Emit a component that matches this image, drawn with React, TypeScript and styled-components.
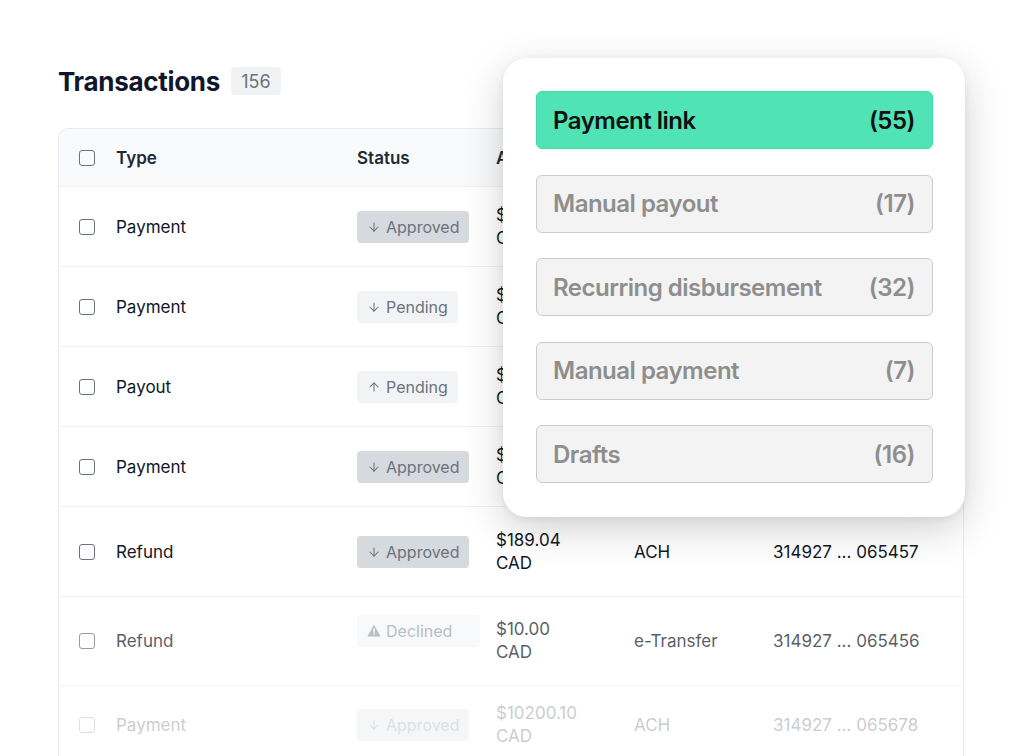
import React from "react";
import styled, { createGlobalStyle } from "styled-components";
import { ArrowDown, ArrowUp } from "lucide-react";

const GlobalStyle = createGlobalStyle`
  html, body {
    margin: 0;
    padding: 0;
    background: #ffffff;
  }
  body {
    font-family: Inter, "Noto Sans", "Liberation Sans", sans-serif;
    color: #111827;
    -webkit-font-smoothing: antialiased;
  }
`;

const Page = styled.div`
  position: relative;
  width: 1024px;
  height: 756px;
  overflow: hidden;
  padding: 66px 0 0 58px;
  box-sizing: border-box;
`;

const TitleRow = styled.div`
  display: flex;
  align-items: center;
  gap: 11px;
  height: 30px;
`;

const Title = styled.h1`
  margin: 0;
  font-size: 26px;
  font-weight: 700;
  letter-spacing: -0.3px;
  color: #0f172a;
`;

const CountBadge = styled.span`
  display: inline-flex;
  align-items: center;
  justify-content: center;
  width: 50px;
  height: 28px;
  border-radius: 4px;
  background: #f1f2f4;
  color: #6b7280;
  font-size: 18px;
`;

const Card = styled.div`
  margin-top: 32px;
  width: 904px;
  border: 1px solid #e8eaed;
  border-bottom: none;
  border-radius: 10px 10px 0 0;
  overflow: hidden;
`;

const Row = styled.div<{ $height: number; $fade?: number; $head?: boolean }>`
  display: grid;
  grid-template-columns: 37px 241px 139px 138px 139px 1fr;
  align-items: center;
  height: ${(p) => p.$height}px;
  padding-left: 20px;
  background: ${(p) => (p.$head ? "#f9fafb" : "#ffffff")};
  border-bottom: 1px solid #f1f2f4;
  opacity: ${(p) => p.$fade ?? 1};
  font-size: 17px;
  font-weight: ${(p) => (p.$head ? 600 : 400)};
  color: ${(p) => (p.$head ? "#1f2937" : "#111827")};
`;

const Check = styled.span`
  width: 14px;
  height: 14px;
  border: 1.5px solid #6b7280;
  border-radius: 3px;
`;

const Cell = styled.span`
  white-space: nowrap;
`;

const Amount = styled.span`
  line-height: 23px;
  color: #111827;
`;

const Status = styled.span<{ $tone: "dark" | "light" | "faint" }>`
  justify-self: start;
  display: inline-flex;
  align-items: center;
  gap: 5px;
  height: 32px;
  padding: 0 ${(p) => (p.$tone === "faint" ? "28px" : "10px")} 0 10px;
  margin-bottom: ${(p) => (p.$tone === "faint" ? "21px" : "0")};
  border-radius: 4px;
  font-size: 16px;
  color: ${(p) => (p.$tone === "faint" ? "#9ca3af" : "#6b7280")};
  background: ${(p) =>
    p.$tone === "dark" ? "#d6d9de" : p.$tone === "light" ? "#f2f3f5" : "#f6f7f8"};
`;

const Popup = styled.div`
  position: absolute;
  top: 58px;
  left: 503px;
  width: 462px;
  box-sizing: border-box;
  padding: 33px 32px 34px 33px;
  background: #ffffff;
  border-radius: 24px;
  box-shadow: 0 12px 40px rgba(0, 0, 0, 0.18), 0 2px 8px rgba(0, 0, 0, 0.06);
  display: flex;
  flex-direction: column;
  gap: 25.5px;
`;

const Option = styled.div<{ $active?: boolean }>`
  display: flex;
  align-items: center;
  justify-content: space-between;
  height: 58px;
  box-sizing: border-box;
  padding: 0 17px 0 16px;
  border-radius: 6px;
  border: 1px solid ${(p) => (p.$active ? "#45d6a8" : "#cbcbcb")};
  background: ${(p) => (p.$active ? "#50e3b5" : "#f3f3f3")};
  color: ${(p) => (p.$active ? "#111111" : "#8e8e8e")};
  font-size: 24px;
  font-weight: 600;
  letter-spacing: -0.5px;
`;

function Warn() {
  return (
    <svg width="14" height="13" viewBox="0 0 14 13">
      <path d="M7 0.5 L13.6 12.5 H0.4 Z" fill="#9ca3af" strokeLinejoin="round" />
      <rect x="6.3" y="4.3" width="1.4" height="4.4" fill="#fff" />
      <rect x="6.3" y="9.6" width="1.4" height="1.4" fill="#fff" />
    </svg>
  );
}

type Tx = {
  type: string;
  status: string;
  dir: "down" | "up" | "warn";
  tone: "dark" | "light" | "faint";
  amount: string;
  method: string;
  account: string;
  height: number;
  fade?: number;
};

const rows: Tx[] = [
  { type: "Payment", status: "Approved", dir: "down", tone: "dark", amount: "$12.00", method: "ACH", account: "314927 ... 065461", height: 79 },
  { type: "Payment", status: "Pending", dir: "down", tone: "light", amount: "$45.10", method: "ACH", account: "314927 ... 065460", height: 79 },
  { type: "Payout", status: "Pending", dir: "up", tone: "light", amount: "$300.00", method: "EFT", account: "314927 ... 065459", height: 79 },
  { type: "Payment", status: "Approved", dir: "down", tone: "dark", amount: "$72.50", method: "ACH", account: "314927 ... 065458", height: 79 },
  { type: "Refund", status: "Approved", dir: "down", tone: "dark", amount: "$189.04", method: "ACH", account: "314927 ... 065457", height: 89 },
  { type: "Refund", status: "Declined", dir: "warn", tone: "faint", amount: "$10.00", method: "e-Transfer", account: "314927 ... 065456", height: 88, fade: 0.7 },
  { type: "Payment", status: "Approved", dir: "down", tone: "dark", amount: "$10200.10", method: "ACH", account: "314927 ... 065678", height: 78, fade: 0.22 },
];

const options = [
  { label: "Payment link", count: 55, active: true },
  { label: "Manual payout", count: 17 },
  { label: "Recurring disbursement", count: 32 },
  { label: "Manual payment", count: 7 },
  { label: "Drafts", count: 16 },
];

export default function App() {
  return (
    <>
      <GlobalStyle />
      <Page>
        <TitleRow>
          <Title>Transactions</Title>
          <CountBadge>156</CountBadge>
        </TitleRow>
        <Card>
          <Row $height={57} $head>
            <Check />
            <Cell>Type</Cell>
            <Cell>Status</Cell>
            <Cell>Amount</Cell>
            <Cell>Method</Cell>
            <Cell>Account</Cell>
          </Row>
          {rows.map((r, i) => (
            <Row key={i} $height={r.height} $fade={r.fade}>
              <Check />
              <Cell>{r.type}</Cell>
              <Status $tone={r.tone}>
                {r.dir === "down" && <ArrowDown size={14} strokeWidth={1.8} />}
                {r.dir === "up" && <ArrowUp size={14} strokeWidth={1.8} />}
                {r.dir === "warn" && <Warn />}
                {r.status}
              </Status>
              <Amount>
                {r.amount}
                <br />
                CAD
              </Amount>
              <Cell>{r.method}</Cell>
              <Cell>{r.account}</Cell>
            </Row>
          ))}
        </Card>
        <Popup>
          {options.map((o) => (
            <Option key={o.label} $active={o.active}>
              <span>{o.label}</span>
              <span>({o.count})</span>
            </Option>
          ))}
        </Popup>
      </Page>
    </>
  );
}
